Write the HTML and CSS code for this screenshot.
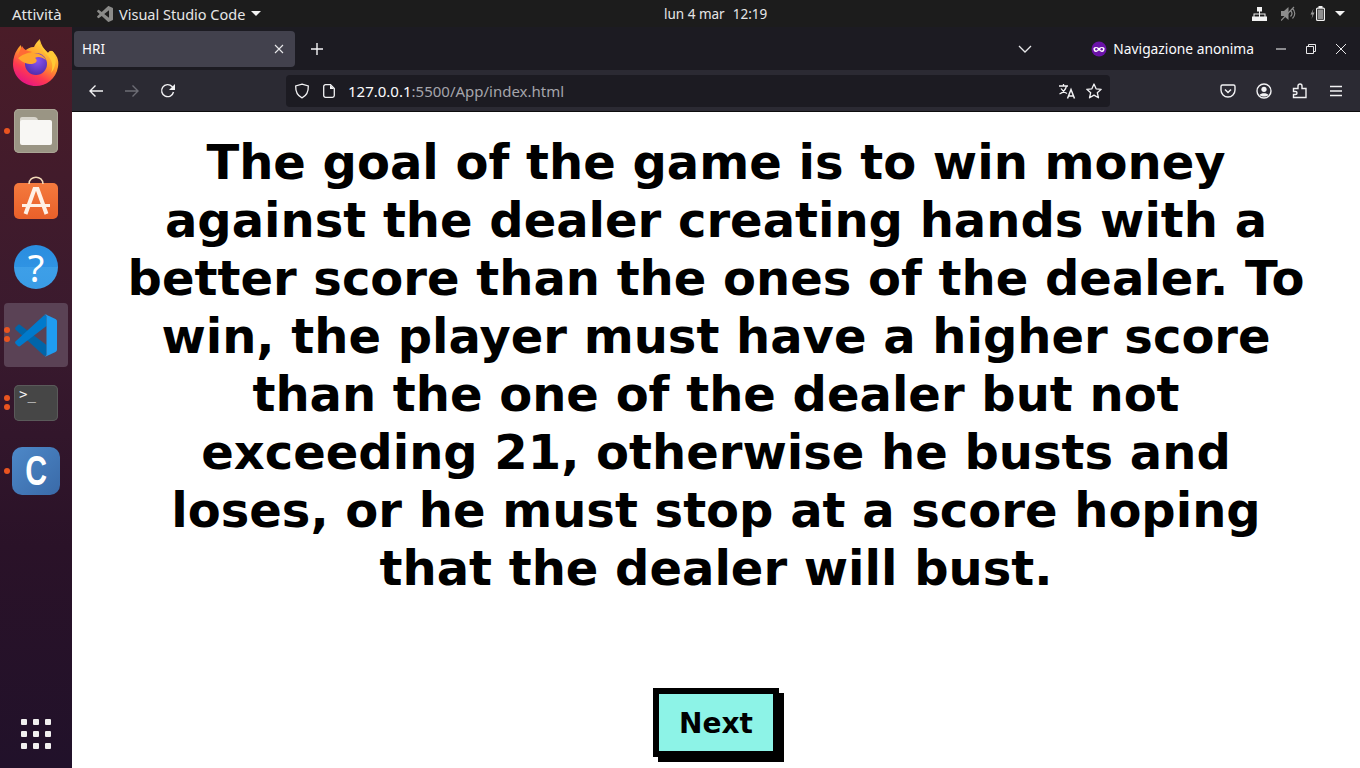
FILE: index.html
```html
<!DOCTYPE html>
<html lang="it">
<head>
<meta charset="utf-8">
<title>HRI</title>
<link rel="stylesheet" href="styles.css">
</head>
<body>
<header class="topbar">
  <div class="top-left">
    <span class="activities">Attività</span>
    <span class="app-menu">
      <svg class="app-glyph" width="16" height="16" viewBox="0 0 100 100"><path fill="#8a8a88" d="M75.800.9 96.400 10.800C98.600 11.800 100 14 100 16.400V83.600C100 86 98.600 88.200 96.400 89.200L75.800 99.100C73.400 100.300 70.600 99.800 68.700 97.900L29.500 62.200 12.400 75.200C10.800 76.400 8.600 76.300 7.100 74.900L1.600 69.900C-.2 68.300-.2 65.400 1.600 63.800L16.400 50 1.600 36.200C-.2 34.600-.2 31.700 1.600 30.100L7.100 25.100C8.600 23.800 10.800 23.700 12.400 24.900L29.500 37.800 68.700 2.100C70.600.2 73.400-.3 75.800.9ZM75 27.300 45.300 50 75 72.700Z"/></svg>
      <span>Visual Studio Code</span>
      <i class="caret"></i>
    </span>
  </div>
  <div class="clock"><span>lun 4 mar</span><span>12:19</span></div>
  <div class="tray">
    <svg class="tray-net" width="15" height="14" viewBox="0 0 15 14"><path fill="#f2f2f2" d="M5 0h5v4.500H8V6.500h5.500V9.500H15V14H10V9.500H12.500V7.500H8V9.500H10V14H5V9.500H7V7.500H2.500V9.500H5V14H0V9.500H1.500V6.500H7V4.500H5Z"/></svg>
    <svg class="tray-vol" width="15" height="15" viewBox="0 0 15 15"><path fill="#8d8d8d" d="M0 5h3L7.500 1v13L3 10H0z"/><path fill="none" stroke="#8d8d8d" stroke-width="1.200" d="M9.500 4.500c1.800 1.800 1.800 4.200 0 6M11.500 2.500c3 2.800 3 7.200 0 10M0 14.500 13 1"/></svg>
    <svg class="tray-bat" width="15" height="15" viewBox="0 0 15 15"><path fill="#9a9a9a" d="M3.500 2.500 .5 8.500h2l-1 4.500 3-6.500h-2z"/><rect x="6.600" y="2.100" width="7.800" height="12.300" rx="1" fill="none" stroke="#f2f2f2" stroke-width="1.200"/><rect x="8.500" y="0" width="4" height="2" fill="#f2f2f2"/><rect x="8" y="3.500" width="5" height="9.500" fill="#8f8f8f"/></svg>
    <i class="caret"></i>
  </div>
</header>
<div class="desktop">
  <nav class="dock">
    <div class="dock-main">
      <div class="dock-item dock-fox">
        <svg class="dock-icon" width="46" height="47" viewBox="0 0 46 47">
          <defs>
            <linearGradient id="ffa" x1="0.8" y1="0.05" x2="0.3" y2="0.95"><stop offset="0" stop-color="#ffdf45"/><stop offset="0.45" stop-color="#ff9a2a"/><stop offset="0.75" stop-color="#ff3a50"/><stop offset="1" stop-color="#e8187f"/></linearGradient>
            <radialGradient id="ffb" cx="0.55" cy="0.35" r="0.7"><stop offset="0" stop-color="#8a55f0"/><stop offset="1" stop-color="#4f2aa8"/></radialGradient>
          </defs>
          <path fill="url(#ffa)" d="M27 0C26 6 30 9 35 14 37 11 39 11 41 14 45 18 46 23 45 28 43 40 33 47 23 47 10 47 0 37 0 25 0 19 2 14 4 11 5 9 6 8 8 6 8 10 9 12 11 13 13 10 17 8 21 8 22 5 24 3 27 0Z"/>
          <path fill="#ffc935" d="M27 1C26 8 31 13 36 18 40 23 40 29 38 34 43 28 44 20 41 14 39 11 37 12 35 14 31 10 28 6 27 1Z"/>
          <circle cx="23" cy="25" r="11" fill="url(#ffb)"/>
          <path fill="#ffa62e" d="M5 19C9 15 15 14 21 14 26 14 31 17 33 21 29 18 25 17 22 19 25 21 24 24 19 25 13 25 9 23 5 19Z"/>
          <path fill="#ff6a35" d="M9 7C7 11 5 15 5 19 10 15 14 14 19 13 15 12 11 11 9 7Z"/>
        </svg>
      </div>
      <div class="dock-item">
        <i class="pip pip-one"></i>
        <div class="tile tile-files"><div class="folder-tab"></div><div class="folder-body"></div></div>
      </div>
      <div class="dock-item">
        <div class="tile tile-store">
          <svg class="store-mark" width="44" height="36" viewBox="0 0 44 36"><path fill="none" stroke="#f3d9b8" stroke-width="1.500" d="M15 1C15-8 29-8 29 1"/><path fill="none" stroke="#fff1e6" stroke-width="4" d="M11.500 31 20.500 6H23.500L32.500 31"/><path fill="none" stroke="#fff1e6" stroke-width="3" d="M8 22.500H36"/></svg>
        </div>
      </div>
      <div class="dock-item">
        <div class="help">?</div>
      </div>
      <div class="dock-item dock-active">
        <i class="pip pip-a"></i><i class="pip pip-b"></i>
        <svg class="dock-icon" width="42" height="43" viewBox="0 0 100 100">
          <path fill="#0065a9" d="M1.600 36.200C-.2 34.600-.2 31.700 1.600 30.100L7.100 25.100C8.600 23.700 10.800 23.600 12.400 24.900L75 72.700V94C75 98 72 98.500 68.700 97.900Z"/>
          <path fill="#007acc" d="M1.600 63.800C-.2 65.400-.2 68.300 1.600 69.900L7.100 74.900C8.600 76.300 10.800 76.400 12.400 75.200L75 27.300V6C75 2 72 1.500 68.700 2.100Z"/>
          <path fill="#1f9cf0" d="M75.800 99.100C73.400 100.300 70.600 99.800 68.700 97.900 71 100.200 75 98.500 75 95.200V4.800C75 1.500 71-.2 68.700 2.100 70.600.2 73.400-.3 75.800.9L96.400 10.800C98.600 11.800 100 14 100 16.400V83.600C100 86 98.600 88.200 96.400 89.200Z"/>
        </svg>
      </div>
      <div class="dock-item dock-term">
        <i class="pip pip-a"></i><i class="pip pip-b"></i>
        <div class="tile-term"><span class="prompt">&gt;_</span></div>
      </div>
      <div class="dock-item dock-code">
        <i class="pip pip-one"></i>
        <div class="tile-c"><span>C</span></div>
      </div>
    </div>
    <div class="apps-grid"><i></i><i></i><i></i><i></i><i></i><i></i><i></i><i></i><i></i></div>
  </nav>
  <div class="browser">
    <div class="tabstrip">
      <div class="tab">
        <span>HRI</span>
        <svg width="10" height="10" viewBox="0 0 10 10"><path stroke="#e8e8ea" stroke-width="1.100" d="M1 1 9 9M9 1 1 9"/></svg>
      </div>
      <svg class="newtab" width="14" height="14" viewBox="0 0 14 14"><path stroke="#f4f4f6" stroke-width="1.400" d="M7 1V13M1 7H13"/></svg>
      <div class="strip-end">
        <svg class="chev" width="14" height="8" viewBox="0 0 14 8"><path fill="none" stroke="#e8e8ea" stroke-width="1.300" d="M1 1 7 7 13 1"/></svg>
        <div class="private">
          <svg width="16" height="16" viewBox="0 0 16 16"><circle cx="8" cy="8" r="7.500" fill="#6a12a8"/><path fill="#fff" d="M2.500 7C4 5.500 6.500 6 8 7 9.500 6 12 5.500 13.500 7 13.800 9 13 11 11 11 9.500 11 9 9.500 8 9.500 7 9.500 6.500 11 5 11 3 11 2.200 9 2.500 7Z"/><circle cx="5.300" cy="8.300" r="1.200" fill="#6a12a8"/><circle cx="10.700" cy="8.300" r="1.200" fill="#6a12a8"/></svg>
          <span>Navigazione anonima</span>
        </div>
        <div class="winctl">
          <svg width="10" height="10" viewBox="0 0 10 10"><path stroke="#e8e8ea" stroke-width="1.100" d="M0 5H10"/></svg>
          <svg width="10" height="10" viewBox="0 0 10 10"><path fill="none" stroke="#e8e8ea" stroke-width="1" d="M.5 2.500H7.500V9.500H.5ZM2.500 2.500V.5H9.500V7.500H7.500"/></svg>
          <svg width="10" height="10" viewBox="0 0 10 10"><path stroke="#e8e8ea" stroke-width="1" d="M0 0 10 10M10 0 0 10"/></svg>
        </div>
      </div>
    </div>
    <div class="navbar">
      <div class="nav-buttons">
        <svg width="16" height="16" viewBox="0 0 16 16"><path fill="none" stroke="#f2f2f4" stroke-width="1.400" d="M15 8H2M7.500 2.500 2 8 7.500 13.500"/></svg>
        <svg width="16" height="16" viewBox="0 0 16 16"><path fill="none" stroke="#6d6d75" stroke-width="1.400" d="M1 8H14M8.500 2.500 14 8 8.500 13.500"/></svg>
        <svg width="16" height="16" viewBox="0 0 16 16"><path fill="none" stroke="#f2f2f4" stroke-width="1.400" d="M13.500 9A6 6 0 1 1 12 3.500L14 5.500"/><path fill="#f2f2f4" d="M15 1V7H9Z"/></svg>
      </div>
      <div class="urlbar">
        <svg class="shield" width="16" height="16" viewBox="0 0 16 16"><path fill="none" stroke="#f2f2f4" stroke-width="1.300" d="M8 1.200 14.300 3C14.500 9 12 13 8 14.800 4 13 1.500 9 1.700 3Z"/></svg>
        <svg class="page" width="12" height="14" viewBox="0 0 12 14"><path fill="none" stroke="#f2f2f4" stroke-width="1.300" d="M2.500.7H7.500L11.300 4.500V11.500A1.800 1.800 0 0 1 9.500 13.300H2.500A1.800 1.800 0 0 1 .7 11.500V2.500A1.800 1.800 0 0 1 2.500.7Z"/><path fill="#f2f2f4" d="M7 1 11 5H7Z"/></svg>
        <span class="url"><b>127.0.0.1</b>:5500/App/index.html</span>
        <span class="url-spacer"></span>
        <svg width="18" height="16" viewBox="0 0 18 16"><path fill="none" stroke="#f2f2f4" stroke-width="1.300" d="M1 3H10M5.500 1V3M8.500 3C7.500 7 5 9.500 1.500 11M3 5.500C4.500 8 6.500 9.500 9 10.500"/><path fill="none" stroke="#f2f2f4" stroke-width="1.500" d="M9.500 15.500 13 6.500 16.500 15.500M10.500 13H15.500"/></svg>
        <svg class="star" width="16" height="16" viewBox="0 0 16 16"><path fill="none" stroke="#f2f2f4" stroke-width="1.300" stroke-linejoin="round" d="M8 1 10.100 5.800 15.200 6.300 11.300 9.700 12.500 14.800 8 12.100 3.500 14.800 4.700 9.700.8 6.300 5.900 5.800Z"/></svg>
      </div>
      <div class="nav-tools">
        <svg width="16" height="16" viewBox="0 0 16 16"><path fill="none" stroke="#f2f2f4" stroke-width="1.400" d="M2.500 2H13.500A1.500 1.500 0 0 1 15 3.500V7A7 7 0 0 1 1 7V3.500A1.500 1.500 0 0 1 2.500 2Z"/><path fill="none" stroke="#f2f2f4" stroke-width="1.500" d="M5 6.500 8 9.500 11 6.500"/></svg>
        <svg width="16" height="16" viewBox="0 0 16 16"><circle cx="8" cy="8" r="7" fill="none" stroke="#f2f2f4" stroke-width="1.400"/><circle cx="8" cy="6.300" r="2.600" fill="#f2f2f4"/><path fill="#f2f2f4" d="M3.500 12C5 9.500 11 9.500 12.500 12 10 14 6 14 3.500 12Z"/></svg>
        <svg width="16" height="16" viewBox="0 0 16 16"><path fill="none" stroke="#f2f2f4" stroke-width="1.400" d="M1.500 5.500H6V3A2 2 0 0 1 10 3V5.500H14V14.500H1.500V11.500H3.500A1.500 1.500 0 0 0 3.500 8.500H1.500Z"/></svg>
        <svg width="16" height="16" viewBox="0 0 16 16"><path stroke="#f2f2f4" stroke-width="1.400" d="M2 3.500H14M2 8H14M2 12.500H14"/></svg>
      </div>
    </div>
    <main class="page-view">
      <p class="message">The goal of the game is to win money against the dealer creating hands with a better score than the ones of the dealer. To win, the player must have a higher score than the one of the dealer but not exceeding 21, otherwise he busts and loses, or he must stop at a score hoping that the dealer will bust.</p>
      <button class="next" type="button">Next</button>
    </main>
  </div>
</div>
</body>
</html>
```
FILE: styles.css
```css
* { box-sizing: border-box; }
html, body { margin: 0; height: 100%; }
body {
  width: 1360px;
  height: 768px;
  overflow: hidden;
  display: flex;
  flex-direction: column;
  background: #1d1b22;
  font-family: "Noto Sans", "Open Sans", sans-serif;
}
.topbar {
  height: 27px;
  flex: none;
  display: grid;
  grid-template-columns: 664px auto 1fr;
  align-items: center;
  background: #1c1c1c;
  color: #e6e6e6;
  font-size: 14.5px;
}
.top-left { display: flex; align-items: center; padding-left: 12px; }
.activities { width: 85px; font-size: 15px; }
.app-menu { display: flex; align-items: center; gap: 6px; }
.caret {
  display: block;
  width: 0;
  height: 0;
  border-left: 5px solid transparent;
  border-right: 5px solid transparent;
  border-top: 5px solid #f2f2f2;
}
.clock { display: flex; gap: 8px; font-size: 13.5px; }
.tray { display: flex; align-items: center; justify-content: flex-end; padding-right: 15px; }
.tray-vol { margin-left: 14px; }
.tray-bat { margin-left: 14px; }
.tray .caret { margin-left: 10px; }
.desktop { flex: 1; display: flex; min-height: 0; }
.dock {
  width: 72px;
  flex: none;
  display: flex;
  flex-direction: column;
  justify-content: space-between;
  background: linear-gradient(180deg, #4a1c28 0%, #3a1a2e 40%, #2a1228 70%, #21112a 100%);
}
.dock-main { display: flex; flex-direction: column; padding-top: 2px; }
.dock-item {
  position: relative;
  height: 68px;
  margin: 0 4px;
  border-radius: 4px;
  display: flex;
  align-items: center;
  justify-content: center;
  flex: none;
}
.dock-fox { height: 66px; margin-bottom: 2px; }
.dock-active { height: 64px; margin-top: 2px; margin-bottom: 4px; background: #5a4255; }
.dock-term { height: 70px; margin-top: -3px; }
.dock-code { height: 74px; margin-top: -4px; }
.pip {
  position: absolute;
  left: 0;
  top: 50%;
  width: 6px;
  height: 6px;
  border-radius: 50%;
  background: #e95420;
}
.pip-one { margin-top: -3px; }
.pip-a { margin-top: -8px; }
.pip-b { margin-top: 1px; }
.tile {
  width: 44px;
  height: 44px;
  border-radius: 5px;
  position: relative;
}
.tile-files { background: #9a9584; box-shadow: inset 0 0 0 1px #aaa595; }
.folder-tab {
  position: absolute;
  left: 6px;
  top: 8px;
  width: 18px;
  height: 8px;
  border-radius: 2px 4px 0 0;
  background: #d8d5cc;
}
.folder-body {
  position: absolute;
  left: 6px;
  top: 11px;
  width: 32px;
  height: 25px;
  border-radius: 2px;
  background: #f8f7f4;
}
.tile-store { height: 36px; background: linear-gradient(180deg, #f47a3e, #e9602a); margin-top: 4px; }
.store-mark { display: block; overflow: visible; }
.help {
  width: 44px;
  height: 44px;
  border-radius: 50%;
  background: linear-gradient(180deg, #2a8ddf 0%, #2f93e3 50%, #3d9fe8 50%, #3a9ce6 100%);
  color: #fff;
  font-size: 38px;
  line-height: 44px;
  text-align: center;
  font-family: "Noto Sans", sans-serif;
}
.tile-term {
  width: 44px;
  height: 36px;
  border-radius: 5px;
  background: #464646;
  box-shadow: inset 0 0 0 1px #5a5a5a;
  padding: 1px 5px;
}
.prompt {
  display: block;
  color: #f4f4f4;
  font-size: 14px;
  line-height: 16px;
  font-family: "DejaVu Sans Mono", monospace;
}
.tile-c {
  width: 48px;
  height: 48px;
  border-radius: 10px;
  background: linear-gradient(135deg, #4d88c8, #3a6aa8);
  color: #fff;
  font-size: 42px;
  font-weight: 700;
  line-height: 48px;
  text-align: center;
  font-family: "Liberation Sans", sans-serif;
}
.tile-c span { display: inline-block; transform: scaleX(0.72); }
.apps-grid {
  display: grid;
  grid-template-columns: repeat(3, 6px);
  gap: 6px;
  justify-content: center;
  padding-bottom: 19px;
}
.apps-grid i { width: 6px; height: 6px; border-radius: 1px; background: #f2f0f0; }
.browser { flex: 1; min-width: 0; display: flex; flex-direction: column; }
.tabstrip {
  height: 43px;
  flex: none;
  display: flex;
  align-items: center;
  background: #1c1b22;
  padding-left: 2px;
}
.tab {
  width: 221px;
  height: 36px;
  margin-top: 1px;
  border-radius: 4px;
  background: #42414d;
  color: #fbfbfe;
  font-size: 13.5px;
  display: flex;
  align-items: center;
  justify-content: space-between;
  padding: 0 11px 0 8px;
}
.newtab { margin-left: 15px; }
.strip-end { flex: 1; display: flex; align-items: center; justify-content: flex-end; }
.chev { margin-right: 59px; }
.private { display: flex; align-items: center; gap: 6px; color: #fbfbfe; font-size: 13.8px; margin-right: 22px; }
.winctl { display: flex; gap: 20px; padding-right: 14px; align-items: center; }
.winctl svg { display: block; }
.navbar {
  height: 42px;
  flex: none;
  display: flex;
  align-items: center;
  background: #2b2a33;
  border-bottom: 1px solid #0c0c0d;
}
.nav-buttons { display: flex; gap: 20px; width: 214px; padding-left: 16px; flex: none; }
.urlbar {
  width: 824px;
  height: 32px;
  flex: none;
  display: flex;
  align-items: center;
  background: #1c1b22;
  border-radius: 4px;
  padding: 0 8px;
  font-size: 15px;
}
.shield { margin-right: 13px; }
.page { margin-right: 13px; }
.url { color: #a5a5ab; }
.url b { font-weight: 400; color: #fbfbfe; }
.url-spacer { flex: 1; }
.star { margin-left: 10px; }
.nav-tools { flex: 1; display: flex; justify-content: flex-end; gap: 20px; padding-right: 16px; }
.page-view {
  flex: 1;
  min-height: 0;
  background: #fff;
  display: flex;
  flex-direction: column;
  align-items: center;
  overflow: hidden;
}
.message {
  margin: 21px 0 0;
  width: 1188px;
  text-align: center;
  font-family: "DejaVu Sans", sans-serif;
  font-weight: 700;
  font-size: 48px;
  line-height: 58px;
  color: #000;
}
.next {
  margin-top: 91px;
  width: 126px;
  height: 69px;
  border: 6px solid #000;
  border-radius: 0;
  background: #8df3e7;
  box-shadow: 5px 5px 0 #000;
  color: #000;
  font-family: "DejaVu Sans", sans-serif;
  font-weight: 700;
  font-size: 28px;
  padding: 2px 0 0;
}
```
